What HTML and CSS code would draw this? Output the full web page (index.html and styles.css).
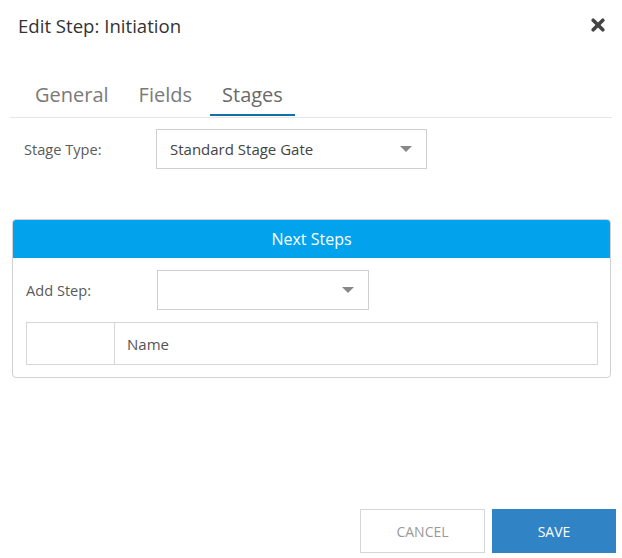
FILE: index.html
```html
<!DOCTYPE html>
<html lang="en">
<head>
<meta charset="utf-8">
<title>Edit Step: Initiation</title>
<link rel="stylesheet" href="styles.css">
</head>
<body>
<div class="dialog">
  <header class="dlg-head">
    <h1 class="dlg-title">Edit Step: Initiation</h1>
    <button class="close" type="button" aria-label="Close">
      <svg viewBox="0 0 14 14" width="14" height="14" aria-hidden="true">
        <path d="M2.2 2.2 L11.8 11.8 M11.8 2.2 L2.2 11.8" stroke="#444" stroke-width="3.6" stroke-linecap="round" fill="none"/>
      </svg>
    </button>
  </header>

  <nav class="tabs">
    <a class="tab">General</a>
    <a class="tab">Fields</a>
    <a class="tab active">Stages</a>
  </nav>

  <div class="form-row stage-row">
    <label class="label stage-label">Stage Type:</label>
    <div class="select select-wide">
      <span class="select-text">Standard Stage Gate</span>
      <span class="caret"></span>
    </div>
  </div>

  <section class="panel">
    <div class="panel-head">Next Steps</div>
    <div class="panel-body">
      <div class="form-row">
        <label class="label add-label">Add Step:</label>
        <div class="select select-narrow">
          <span class="select-text"></span>
          <span class="caret"></span>
        </div>
      </div>
      <table class="grid">
        <tr>
          <th class="sel-col"></th>
          <th class="name-col">Name</th>
        </tr>
      </table>
    </div>
  </section>

  <footer class="dlg-foot">
    <button class="btn btn-cancel" type="button">CANCEL</button>
    <button class="btn btn-save" type="button">SAVE</button>
  </footer>
</div>
</body>
</html>
```

FILE: styles.css
```css
* { box-sizing: border-box; }

html, body {
  margin: 0;
  padding: 0;
  background: #fff;
}

body {
  font-family: "Open Sans", "Noto Sans", sans-serif;
  color: #444;
}

.dialog {
  height: 558px;
  width: 622px;
  display: flex;
  flex-direction: column;
}

.dlg-head {
  display: flex;
  align-items: center;
  justify-content: space-between;
  padding: 14px 17px 0 18px;
  height: 38px;
}

.dlg-title {
  margin: 0;
  font-size: 18.6px;
  line-height: 24px;
  font-weight: 400;
  color: #333;
}

.close {
  border: 0;
  background: none;
  padding: 0;
  width: 14px;
  height: 14px;
  display: flex;
  margin-top: -3px;
}

.tabs {
  display: flex;
  gap: 6px;
  margin: 43px 10px 0 10px;
  padding-left: 13px;
  border-bottom: 1px solid #e6e6e6;
}

.tab {
  font-size: 20px;
  line-height: 28px;
  padding: 0 12px 5px;
  color: #7a7a7a;
  border-bottom: 2px solid transparent;
  margin-bottom: 1px;
}

.tab.active {
  color: #6a6a6a;
  border-bottom-color: #136fab;
}

.form-row {
  display: flex;
  align-items: center;
}

.stage-row {
  margin-top: 11px;
  padding-left: 24px;
}

.label {
  font-size: 14.6px;
  color: #5a5a5a;
}

.stage-label { width: 132px; }
.add-label { width: 131px; }

.select {
  position: relative;
  height: 40px;
  border: 1px solid #cfcfcf;
  background: #fff;
  display: flex;
  align-items: center;
  padding-left: 13px;
}

.select-wide { width: 271px; }
.select-narrow { width: 212px; }

.select-text {
  font-size: 15px;
  color: #444;
}

.caret {
  position: absolute;
  right: 14px;
  top: 16px;
  width: 0;
  height: 0;
  border-left: 6px solid transparent;
  border-right: 6px solid transparent;
  border-top: 6px solid #888;
}

.panel {
  margin: 50px 11px 0 12px;
  border: 1px solid #d2d2d2;
  border-radius: 4px;
  overflow: hidden;
}

.panel-head {
  height: 38px;
  background: #02a3ec;
  color: #fff;
  font-size: 16px;
  display: flex;
  align-items: center;
  justify-content: center;
}

.panel-body {
  padding: 12px 12px 12px 13px;
}

.grid {
  margin-top: 12px;
  width: 100%;
  border-collapse: collapse;
}

.grid th {
  height: 42px;
  border: 1px solid #d6d6d6;
  font-weight: 400;
  text-align: left;
  font-size: 15px;
  color: #555;
  padding: 0 0 0 12px;
}

.grid .sel-col { width: 88px; }

.dlg-foot {
  margin-top: auto;
  display: flex;
  justify-content: flex-end;
  gap: 7px;
  padding: 0 6px 5px 0;
}

.btn {
  height: 44px;
  font-family: inherit;
  font-size: 14px;
  border-radius: 0;
  cursor: pointer;
}

.btn-cancel {
  width: 125px;
  background: #fff;
  border: 1px solid #d6d6d6;
  color: #9a9a9a;
}

.btn-save {
  width: 124px;
  background: #3083c5;
  border: 1px solid #3083c5;
  color: #fff;
}
```
